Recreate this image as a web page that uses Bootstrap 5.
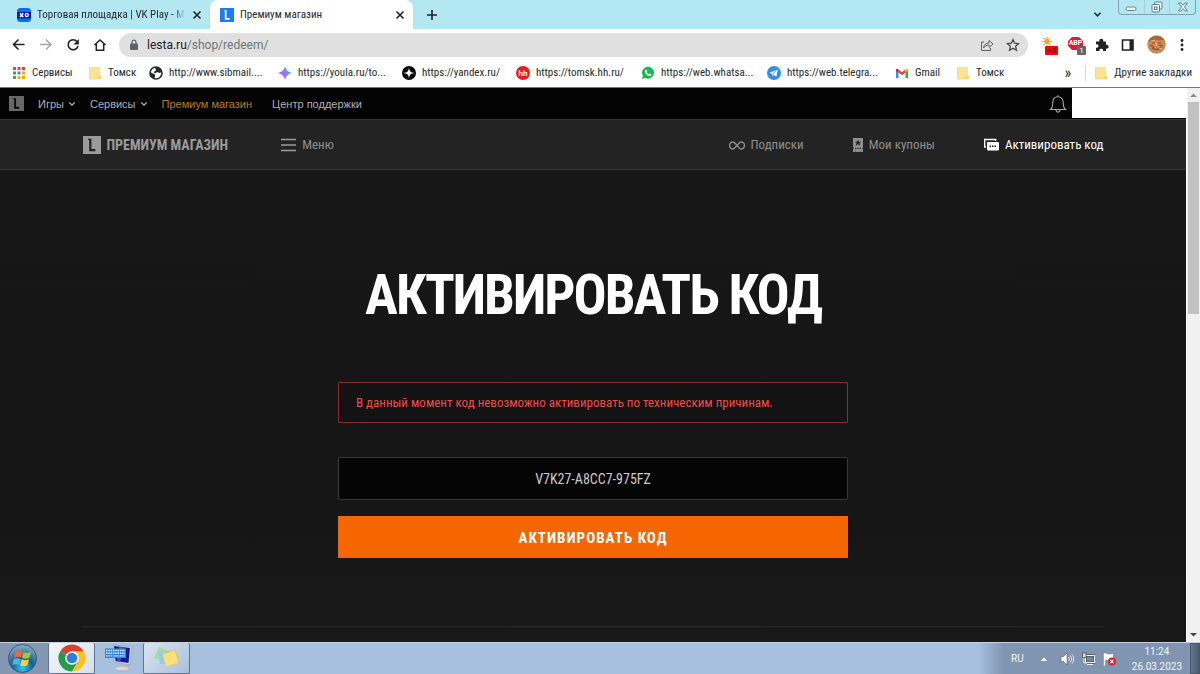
<!DOCTYPE html>
<html lang="ru">
<head>
<meta charset="utf-8">
<meta name="viewport" content="width=device-width, initial-scale=1">
<title>Премиум магазин</title>
<link href="https://cdn.jsdelivr.net/npm/bootstrap@5.3.0/dist/css/bootstrap.min.css" rel="stylesheet">
<style>
  body { font: 11px/16px "Roboto Condensed", Roboto, "Noto Sans", sans-serif; color: #26292d; background: #fff; }
  svg { display: block; flex: none; }
  a { color: inherit; text-decoration: none; }
  button { color: inherit; }
  .bare { border: 0; background: none; padding: 0; }

  /* browser window */
  .tab-strip { height: 29px; background: #b3e8f3; }
  .tab { height: 29px; gap: 6px; }
  .tab-idle { width: 210px; padding: 0 7px 0 17px; }
  .tab-active { width: 203px; padding: 0 7px 0 10px; background: #fff; border-radius: 8px 8px 0 0; }
  .tab-label { white-space: nowrap; text-align: left; min-width: 0; }
  .tab-idle .tab-label { -webkit-mask-image: linear-gradient(90deg, #000 92%, transparent); mask-image: linear-gradient(90deg, #000 92%, transparent); }
  .win-buttons { height: 15px; width: 78px; border: 1px solid #7fa3ad; border-top: 0; border-radius: 0 0 4px 4px; }
  .win-buttons button + button { border-left: 1px solid #a5cdd6; }
  .toolbar { height: 31px; padding: 0 12px; }
  .toolbar-nav { gap: 13px; }
  .omnibox { height: 24px; border-radius: 12px; background: #e0e0e0; padding: 0 8px 0 10px; gap: 8px; margin: 0 14px 0 12px; }
  .omnibox-text { font-family: Roboto, sans-serif; font-size: 12px; color: #70757a; }
  .omnibox-text b { font-weight: 400; color: #202124; }
  .tools { gap: 12px; }
  .chip { position: absolute; font: 8px/9px Roboto, sans-serif; text-align: center; border-radius: 1px; }
  .bookmarks { height: 27px; padding: 0 8px 2px 12px; display: grid; align-items: center; white-space: nowrap; overflow: hidden;
    grid-template-columns: 76px 61px 129px 124px 114px 125px 126px 128px 61px 1fr auto auto; }
  .bookmarks a { display: flex; align-items: center; gap: 6px; }
  .bookmarks a + button { font-size: 16px; margin-right: 14px; }
  .bookmarks a:last-child { border-left: 1px solid #d5d7da; padding-left: 8px; }
  .window-body { border-top: 1px solid #777; }

  /* shop page */
  .page { background: #171717; color: #b4b4b4; overflow: hidden; }
  .portal { height: 32px; background: #030303; border-bottom: 1px solid #333; font: 11px/16px "Liberation Sans", Arial, sans-serif; padding-left: 9px; color: #b0b0b0; }
  .portal-menu { gap: 14px; margin-left: 14px; }
  .portal-menu .current { color: #b87b22; }
  .portal-menu a { margin-right: 6px; }
  .user-box { width: 114px; height: 30px; background: #fff; }
  .narrow { font-family: "Roboto Condensed", "Liberation Sans Narrow", Roboto, sans-serif; }
  .shop-nav { height: 50px; background: #232323; border-bottom: 1px solid #333; font-size: 13px; color: #8e8e8e; }
  .inner { width: 87%; max-width: 1021px; margin: 0 auto; }
  .shop-nav a, .shop-nav button { display: flex; align-items: center; gap: 6px; }
  .shop-brand { font-size: 14px; font-weight: 700; color: #9b9b9b; margin-right: 53px; }
  .shop-links { gap: 49px; }
  .hero { padding-top: 92px; background: linear-gradient(#171717, #161616 60%, #1b1a1a); }
  .hero h1 { font-size: 55px; line-height: 66px; font-weight: 700; letter-spacing: -2px; color: #fff; margin: 0 0 54px; }
  .redeem { width: 100%; max-width: 510px; margin: 0 auto; }
  .notice { border: 1px solid #92262a; background: #131313; color: #f04a48; font-size: 13px; line-height: 19px; padding: 10px 17px; margin-bottom: 34px; border-radius: 1px; }
  .code-field { height: 43px; border: 1px solid #373737; background: #050505; color: #ccc; font-size: 14px; border-radius: 2px; margin-bottom: 16px; width: 100%; text-align: center; display: block; }
  .redeem .go { height: 42px; border: 0; border-radius: 0; background: #f56600; color: #fff; font-size: 15px; font-weight: 700; letter-spacing: 1px; padding: 2px 0 0; }
  .hero hr { margin-top: 68px; border-color: #2b2b2b; opacity: 1; margin-bottom: 0; }
  .scroll-rail { width: 14px; background: #f1f1f1; border-left: 1px solid #fff; }
  .scroll-thumb { width: 11px; height: 212px; background: #c1c1c1; }

  /* taskbar */
  .taskbar { height: 32px; background: #a6c0de; border-top: 1px solid #c3d3e4; }
  .start { width: 48px; background: #8397b2; padding-left: 7px; }
  .task { width: 47px; border: 1px solid #5f7590; border-top: 0; border-radius: 2px; display: flex; align-items: center; justify-content: center; padding: 0; }
  .task-on { background: linear-gradient(135deg, #f4f7fa, #d6e0ec); }
  .task-open { background: linear-gradient(135deg, #dbe4ef, #aac1dc); }
  .task-pin { width: 48px; background: none; border-color: transparent; }
  .tray { background: linear-gradient(90deg, #a6c0de, #8095b1 24px); color: #f1f5fa; padding-left: 32px; font: 10px/15px Roboto, sans-serif; }
  .show-desktop { width: 10px; border: 1px solid #47576c; background: linear-gradient(90deg, #65758b, #4c5c72); }
</style>
</head>
<body class="d-flex flex-column vh-100 overflow-hidden">

<svg width="0" height="0" class="position-absolute" aria-hidden="true">
  <symbol id="close" viewBox="0 0 12 12"><path d="M2.500 2.500l7 7M9.500 2.500l-7 7" stroke="#222" stroke-width="1.600"/></symbol>
  <symbol id="folder" viewBox="0 0 14 14"><path d="M1.500 1h10.500v9l1 1v2H1.500z" fill="#fde293"/><path d="M1.500 1v12h8" fill="none" stroke="#f7cf5b" stroke-width=".6"/><path d="M9.500 11.500l1-1.500H13v3h-3z" fill="#f9d55f"/></symbol>
  <symbol id="lesta" viewBox="0 0 16 16"><path fill="currentColor" d="M0 0h16v16H0z"/><path d="M4.500 2.500H7.500V11.500h3.500v2H5.500V3.500h-1z" fill="var(--cut)"/></symbol>
  <symbol id="down" viewBox="0 0 8 8"><path d="M1.300 2.500L4 5.200l2.700-2.700" fill="none" stroke="currentColor" stroke-width="1.300"/></symbol>
</svg>

<header class="flex-shrink-0">
  <div class="tab-strip d-flex">
    <div class="tab tab-idle d-flex align-items-center">
      <svg width="14" height="14" viewBox="0 0 14 14"><rect width="14" height="14" rx="3.500" fill="#0a6cff"/><path d="M0 4h14v6.500H0z" fill="#0a1bb8"/><path d="M3 5.300l3.200 3.700M6.200 5.300L3 9" stroke="#fff" stroke-width="1.500"/><circle cx="9.800" cy="7.100" r="1.500" fill="none" stroke="#fff" stroke-width="1.300"/></svg>
      <button class="bare tab-label flex-grow-1">Торговая площадка | VK Play - М</button>
      <button class="bare" aria-label="Закрыть вкладку"><svg width="12" height="12"><use href="#close"/></svg></button>
    </div>
    <div class="tab tab-active d-flex align-items-center">
      <svg width="14" height="14" style="--cut:#fff" color="#1b7bf0"><use href="#lesta"/></svg>
      <button class="bare tab-label flex-grow-1">Премиум магазин</button>
      <button class="bare" aria-label="Закрыть вкладку"><svg width="12" height="12"><use href="#close"/></svg></button>
    </div>
    <button class="bare ms-2 ps-1" aria-label="Новая вкладка"><svg width="14" height="14" viewBox="0 0 14 14"><path d="M7 2v10M2 7h10" stroke="#222" stroke-width="1.600"/></svg></button>
    <button class="bare ms-auto me-3" aria-label="Поиск вкладок"><svg width="9" height="9" color="#222"><use href="#down"/></svg></button>
    <div class="win-buttons d-flex me-1">
      <button class="bare flex-fill" aria-label="Свернуть"><svg class="mx-auto" width="12" height="10" viewBox="0 0 12 10"><rect x="1" y="5" width="10" height="3.500" rx="1.500" fill="#e8f7fa" stroke="#688792"/></svg></button>
      <button class="bare flex-fill" aria-label="Развернуть"><svg class="mx-auto" width="12" height="12" viewBox="0 0 12 12"><g fill="#e8f7fa" stroke="#5f7d88"><rect x="3.500" y="1" width="7.500" height="7" rx="1"/><rect x="1" y="3.500" width="7.500" height="7.500" rx="1"/><rect x="3.500" y="6" width="2.500" height="2.500"/></g></svg></button>
      <button class="bare flex-fill" aria-label="Закрыть"><svg class="mx-auto" width="12" height="12" viewBox="0 0 12 12"><path d="M1.500 2h2.500l2 2.300L8 2h2.500L7.500 6l3 4H8L6 7.700 4 10H1.500l3-4z" fill="#e8f7fa" stroke="#688792"/></svg></button>
    </div>
  </div>

  <div class="toolbar d-flex align-items-center">
    <nav class="toolbar-nav d-flex" aria-label="Навигация">
      <button class="bare" aria-label="Назад"><svg width="14" height="14" viewBox="0 0 14 14"><path d="M12.500 6.500h-11M6.500 1.500l-5 5 5 5" fill="none" stroke="#222" stroke-width="1.500"/></svg></button>
      <button class="bare" aria-label="Вперёд"><svg width="14" height="14" viewBox="0 0 14 14"><path d="M1 6.500h11M7 1.500l5 5-5 5" fill="none" stroke="#a3a3a3" stroke-width="1.400"/></svg></button>
      <button class="bare" aria-label="Обновить"><svg width="14" height="14" viewBox="0 0 14 14"><path d="M11 3.500a5 5 0 1 0 1 4.500" fill="none" stroke="#222" stroke-width="1.600"/><path d="M12.800 1v5.500H7.500z" fill="#222"/></svg></button>
      <button class="bare" aria-label="Домой"><svg width="14" height="14" viewBox="0 0 14 14"><path d="M1.500 7L7 2l5.500 5M3.300 6v6.200h7.400V6" fill="none" stroke="#222" stroke-width="1.500"/></svg></button>
    </nav>
    <div class="omnibox d-flex align-items-center flex-grow-1">
      <svg width="10" height="12" viewBox="0 0 10 12"><rect x="1" y="4.500" width="8" height="6.500" rx="1" fill="#5f6368"/><path d="M3 5V3.200a2 2 0 0 1 4 0V5" fill="none" stroke="#5f6368" stroke-width="1.200"/></svg>
      <a href="#" class="omnibox-text flex-grow-1"><b>lesta.ru</b>/shop/redeem/</a>
      <button class="bare me-1" aria-label="Поделиться"><svg width="14" height="14" viewBox="0 0 14 14"><path d="M4 4H1.500v8.500h9V10M3.500 10c.5-3.500 2.500-5 5.500-5V2.500L13 6 9 9.300V7C6.500 7 5 8 3.500 10z" fill="none" stroke="#5f6368" stroke-width="1"/></svg></button>
      <button class="bare" aria-label="В закладки"><svg width="14" height="14" viewBox="0 0 14 14"><path d="M7 1.500l1.600 3.700 4 .4-3 2.700.9 4L7 10.200l-3.500 2.100.9-4-3-2.700 4-.4z" fill="none" stroke="#444" stroke-width="1.200"/></svg></button>
    </div>
    <div class="tools d-flex align-items-center">
      <button class="bare position-relative" aria-label="Погода"><svg width="14" height="16" viewBox="0 0 14 16"><g stroke="#f0a020" stroke-width="1" stroke-dasharray="1.600 7"><path d="M5 0v10M5 9.500V0M0 4.500h10M10 4.500H0M1.500 1l7 7M8.500 8l-7-7M8.500 1l-7 7M1.500 8l7-7"/></g><circle cx="5" cy="4.500" r="2.800" fill="#f7a32b"/></svg><span class="chip" style="left:3px;top:9px;width:13px;background:#f00;color:#400">+3</span></button>
      <button class="bare position-relative" aria-label="Блокировщик рекламы"><svg width="15" height="16" viewBox="0 0 15 16"><path d="M4 0h7l4 4v5l-4 4H4L0 9V4z" fill="#e3173e"/><text x="7.500" y="8" text-anchor="middle" font-family="Roboto" font-size="7" font-weight="700" fill="#fff">ABP</text></svg><span class="chip" style="left:9px;top:9px;width:9px;background:#666;color:#fff">1</span></button>
      <button class="bare" aria-label="Расширения"><svg width="14" height="14" viewBox="0 0 14 14"><path d="M1 3.500h3.500a2 2 0 1 1 3.600 0H11V7a1.900 1.900 0 1 1 0 3.500V13H8a1.800 1.800 0 1 0-3.500 0H1V9.500a1.700 1.700 0 1 0 0-3z" fill="#222"/></svg></button>
      <button class="bare" aria-label="Боковая панель"><svg width="14" height="14" viewBox="0 0 14 14"><path d="M1.500 2h10.500v10H1.500z" fill="none" stroke="#222" stroke-width="1.600"/><path d="M8.500 2H12v10H8.500z" fill="#222"/></svg></button>
      <button class="bare" aria-label="Профиль"><svg width="19" height="19" viewBox="0 0 19 19"><circle cx="9.500" cy="9.500" r="9.300" fill="#c88a56"/><path d="M1.500 6c3-6 12-7 16-1-3-1-4 1-7 0s-5 3-9 1z" fill="#a9643a"/><path d="M5 8h3m3 0h3M5 13c3 2 7 2 10-1M3 11c2-1 3 0 4 2M12 10c2 1 3 0 4 1" stroke="#93502c" stroke-width="1.100" fill="none"/><path d="M8 8c2 0 2 1 1 3M4 6l4-1M12 14l3-1" stroke="#e7ba8e" fill="none"/></svg></button>
      <button class="bare" aria-label="Меню браузера"><svg width="10" height="14" viewBox="0 0 10 14"><g fill="#222"><circle cx="4" cy="2.500" r="1.400"/><circle cx="4" cy="7" r="1.400"/><circle cx="4" cy="11.500" r="1.400"/></g></svg></button>
    </div>
  </div>

  <nav class="bookmarks" aria-label="Закладки">
    <a href="#"><svg width="14" height="14" viewBox="0 0 14 14"><path d="M1 1h3v3H1zM5.500 1h3v3h-3zM10 1h3v3h-3z" fill="#ea4335"/><path d="M1 5.500h3v3H1zM1 10h3v3H1z" fill="#34a853"/><path d="M5.500 5.500h3v3h-3z" fill="#4285f4"/><path d="M10 5.500h3v3h-3zM5.500 10h3v3h-3zM10 10h3v3h-3z" fill="#fbaa05"/></svg>Сервисы</a>
    <a href="#"><svg width="14" height="14"><use href="#folder"/></svg>Томск</a>
    <a href="#"><svg width="14" height="14" viewBox="0 0 14 14"><circle cx="7" cy="7" r="6" fill="#fff" stroke="#26292d" stroke-width="1.600"/><path d="M1 6l3 1.500 2 1v2.500l-1 1.500C2.500 12 .8 9 1 6zM6 1c3-.5 6 1.500 6.500 5l-2 1-2.500-1-2 1.500L4.500 6 7 4.500z" fill="#26292d"/></svg>http://www.sibmail....</a>
    <a href="#"><svg width="14" height="14" viewBox="0 0 14 14"><defs><linearGradient id="yo" x1="0" y1="1" x2="1" y2="0"><stop offset=".2" stop-color="#e04df0"/><stop offset=".5" stop-color="#8a7bf8"/><stop offset=".8" stop-color="#22c8f0"/></linearGradient></defs><path d="M7 0c1 4 3 6 7 7-4 1-6 3-7 7-1-4-3-6-7-7 4-1 6-3 7-7z" fill="url(#yo)"/></svg>https://youla.ru/to...</a>
    <a href="#"><svg width="14" height="14" viewBox="0 0 14 14"><circle cx="7" cy="7" r="7" fill="#050505"/><path d="M7 1c.3 4.500 1.500 5.700 6 6-4.500.3-5.700 1.500-6 6-.3-4.500-1.500-5.700-6-6 4.500-.3 5.700-1.500 6-6z" fill="#fff"/></svg>https://yandex.ru/</a>
    <a href="#"><svg width="14" height="14" viewBox="0 0 14 14"><circle cx="7" cy="7" r="7" fill="#f5151d"/><text x="7" y="10" text-anchor="middle" font-family="Roboto" font-size="8" font-weight="700" fill="#fff">hh</text></svg>https://tomsk.hh.ru/</a>
    <a href="#"><svg width="14" height="14" viewBox="0 0 14 14"><path d="M1 13l.9-3.200A6 6 0 1 1 4.200 12z" fill="#15b94f"/><path d="M4.500 3.800l1-.2.8 1.700-.6.9c.5 1 1.200 1.600 2.200 2l.8-.8 1.600.9c-.1 1.300-1 1.800-2.200 1.500C5.800 9.300 4 7.300 3.800 5.500z" fill="#fff"/></svg>https://web.whatsa...</a>
    <a href="#"><svg width="14" height="14" viewBox="0 0 14 14"><circle cx="7" cy="7" r="7" fill="#2e8fea"/><path d="M2.500 6.800l8.300-3.300-1.500 7.300-2.500-1.800-1.300 1.300-.4-2.300z" fill="#fff"/><path d="M5.300 8l3.700-2.800" stroke="#2e8fea" stroke-width=".8"/></svg>https://web.telegra...</a>
    <a href="#"><svg width="14" height="14" viewBox="0 0 14 14"><path d="M1 4v8h2.500V5z" fill="#4285f4"/><path d="M10.500 5v7H13V4z" fill="#34a853"/><path d="M3.500 3.500L7 6.200l3.500-2.700v3L7 9.200 3.500 6.500z" fill="#ea4335"/><path d="M1 4c0-2 1.500-1.500 2.500-.5v3L1 4.700z" fill="#c5221f"/><path d="M13 4c0-2-1.500-1.500-2.500-.5v3L13 4.700z" fill="#fbbc04"/></svg>Gmail</a>
    <a href="#"><svg width="14" height="14"><use href="#folder"/></svg>Томск</a>
    <button class="bare" aria-label="Другие">»</button>
    <a href="#"><svg width="14" height="14"><use href="#folder"/></svg>Другие закладки</a>
  </nav>
</header>

<div class="window-body d-flex flex-grow-1 overflow-hidden">
  <div class="page flex-grow-1">
    <nav class="portal d-flex align-items-center" aria-label="Портал">
      <a href="#" aria-label="Lesta"><svg width="15" height="15" style="--cut:#0a0a0a" color="#686868"><use href="#lesta"/></svg></a>
      <div class="portal-menu d-flex align-items-center">
        <button class="bare d-flex align-items-center gap-1">Игры <svg width="8" height="8"><use href="#down"/></svg></button>
        <button class="bare d-flex align-items-center gap-1">Сервисы <svg width="8" height="8"><use href="#down"/></svg></button>
        <a href="#" class="current">Премиум магазин</a>
        <a href="#">Центр поддержки</a>
      </div>
      <button class="bare ms-auto me-1" aria-label="Уведомления"><svg width="20" height="20" viewBox="0 0 20 20"><path d="M10 1.200v1.500M2.500 15.500h15c-2-1.500-2.200-3-2.200-6.500C15.300 5 13 2.800 10 2.800S4.700 5 4.700 9c0 3.500-.2 5-2.200 6.500zM8 16c.2 2.800 3.800 2.800 4 0" fill="none" stroke="#aaa" stroke-width="1.100"/></svg></button>
      <div class="user-box align-self-start"></div>
    </nav>

    <nav class="shop-nav narrow d-flex" aria-label="Магазин">
      <div class="inner d-flex align-items-center">
        <a href="#" class="shop-brand"><svg width="18" height="18" style="--cut:#232323" color="#9b9b9b"><use href="#lesta"/></svg>ПРЕМИУМ МАГАЗИН</a>
        <button class="bare"><svg width="15" height="14" viewBox="0 0 15 14"><path d="M0 1.500h15M0 7h15M0 12.500h15" stroke="#9b9b9b" stroke-width="1.600"/></svg>Меню</button>
        <div class="shop-links d-flex ms-auto">
          <a href="#"><svg width="16" height="14" viewBox="0 0 16 14"><path d="M8 7.500C6.500 5.500 5.500 4 4 4a3.300 3.300 0 0 0 0 7c1.500 0 2.500-1.500 4-3.500S10.500 4 12 4a3.300 3.300 0 0 1 0 7c-1.500 0-2.500-1.500-4-3.500z" fill="none" stroke="#8e8e8e" stroke-width="1.400"/></svg>Подписки</a>
          <a href="#"><svg width="10" height="14" viewBox="0 0 10 14"><path d="M0 0h10v9.500a1 1 0 0 0 0 1.800V14H8.300a1 1 0 0 0-1.800 0h-3a1 1 0 0 0-1.800 0H0v-2.700a1 1 0 0 0 0-1.800z" fill="#8e8e8e"/><path d="M5 1.800l1 2h2L6.500 5.200l.6 2.200L5 6.200 2.900 7.400l.6-2.200L2 3.800h2z" fill="#232323"/><path d="M2 10.400h6" stroke="#232323" stroke-dasharray="1.500 .7"/></svg>Мои купоны</a>
          <a href="#" class="text-white" aria-current="page"><svg width="15" height="13" viewBox="0 0 15 13"><path d="M2 9H.7V1.500h11V3" fill="none" stroke="#fff" stroke-width="1.300"/><rect x="3" y="4" width="12" height="8.500" rx="1" fill="#fff"/><path d="M5.500 8.300h7" stroke="#232323" stroke-width="1.500" stroke-dasharray="1.500 1"/></svg>Активировать код</a>
        </div>
      </div>
    </nav>

    <main class="hero narrow h-100 text-center">
      <div class="inner">
        <h1>АКТИВИРОВАТЬ КОД</h1>
        <form class="redeem" onsubmit="return false">
          <div class="notice text-start" role="alert">В данный момент код невозможно активировать по техническим причинам.</div>
          <input class="code-field" type="text" value="V7K27-A8CC7-975FZ" aria-label="Код">
          <button class="btn go w-100">АКТИВИРОВАТЬ КОД</button>
        </form>
        <hr>
      </div>
    </main>
  </div>
  <div class="scroll-rail d-flex flex-column align-items-center justify-content-between flex-shrink-0">
    <div>
      <svg width="11" height="14" viewBox="0 0 11 14"><path d="M2 9l3.500-3.500L9 9z" fill="#8d8d8d"/></svg>
      <div class="scroll-thumb"></div>
    </div>
    <svg width="11" height="14" viewBox="0 0 11 14"><path d="M2 5l3.500 3.500L9 5z" fill="#444"/></svg>
  </div>
</div>

<footer class="taskbar d-flex flex-shrink-0">
  <button class="bare start" aria-label="Пуск"><svg width="31" height="31" viewBox="0 0 31 31"><defs><radialGradient id="orb" cx=".5" cy=".85" r=".85"><stop offset="0" stop-color="#35c5ee"/><stop offset=".45" stop-color="#14608f"/><stop offset="1" stop-color="#8fb1c9"/></radialGradient></defs><circle cx="15.500" cy="15.500" r="14" fill="url(#orb)" stroke="#31597a"/><path d="M8.500 8.500c3-1.500 5-1 7 0L14 14.500c-2-1-4-1-7 .3z" fill="#f0662c"/><path d="M16.500 9c2.500 1.200 4.500 1.200 7.500 0l-1.700 6c-3 1.200-5 .9-7.300-.3z" fill="#9ccb3b"/><path d="M6.700 16c3-1.300 5-1 7 0l-1.600 6c-2-1-4-1.200-7 0z" fill="#4db2ee"/><path d="M14.800 16.300c2.500 1.200 4.500 1.200 7.200.2l-1.700 6c-3 1-5 .9-7.200-.3z" fill="#fcd03d"/></svg></button>
  <button class="task task-on" aria-label="Google Chrome"><svg width="28" height="28" viewBox="0 0 28 28"><path d="M14 14L2.300 7.200A13.500 13.500 0 0 1 25.700 7.200z" fill="#e33b2e"/><path d="M14 14L2.300 7.200A13.500 13.500 0 0 0 14 27.500l5.900-10z" fill="#249c4c"/><path d="M14 7.200h11.700A13.500 13.500 0 0 1 14 27.500l6-10z" fill="#fcc31d"/><circle cx="14" cy="14" r="6.800" fill="#fff"/><circle cx="14" cy="14" r="5.300" fill="#317be8"/></svg></button>
  <button class="task task-pin" aria-label="Экранная клавиатура"><svg width="28" height="28" viewBox="0 0 28 28"><path d="M8 1l19 2-2 18-16-3z" fill="#d8d8d6" stroke="#999" stroke-width=".6"/><path d="M9 2l16 2-1.500 15L10.500 17z" fill="#0b1c9c"/><path d="M14 2.500l5 1L15 18l-3-.5z" fill="#3157d8"/><path d="M14 20l6 1v3h-6z" fill="#bbb"/><ellipse cx="17" cy="24.500" rx="7.500" ry="2.500" fill="#d5d7da" stroke="#999" stroke-width=".5"/><path d="M0 4.500h21V14H0z" fill="#2f86d2"/><path d="M1 6.500h19M1 9.200h19M1 11.900h19" stroke="#d9efff" stroke-width="1.400" stroke-dasharray="1.500 .8"/></svg></button>
  <button class="task task-open" aria-label="Записки"><svg width="28" height="28" viewBox="0 0 28 28"><path d="M6 3l10 4-4 10-11-3z" fill="#a6dca5"/><path d="M6 8l12-1 0 13-11 0z" fill="#94c9f2"/><path d="M9 10l13-4 4 13-13 4z" fill="#f8e07a" stroke="#dbc057" stroke-width=".6"/></svg></button>
  <div class="tray ms-auto d-flex align-items-center">
    <span class="me-3">RU</span>
    <button class="bare me-2" aria-label="Скрытые значки"><svg width="8" height="8" viewBox="0 0 8 8"><path d="M.8 6L4 2.500 7.200 6z" fill="#fff"/></svg></button>
    <button class="bare ms-1 me-2" aria-label="Громкость"><svg width="14" height="14" viewBox="0 0 14 14"><path d="M1 4.500h2.500L7 1v12L3.500 9.500H1z" fill="#fff" stroke="#556" stroke-width=".6"/><path d="M8.500 5c1 1.500 1 2.500 0 4M10.200 3.500c2 2.500 2 4.500 0 7M12 2.500c2.300 3 2.300 6 0 9" fill="none" stroke="#e9eef4" stroke-width=".9"/></svg></button>
    <button class="bare me-2" aria-label="Сеть"><svg width="13" height="14" viewBox="0 0 13 14"><rect x="3.500" y="3.500" width="9" height="7" fill="#76869a" stroke="#333c48" stroke-width="2"/><rect x="3.500" y="3.500" width="9" height="7" fill="none" stroke="#f0f2f4"/><path d="M5 12.500h6M2 4v7h3" stroke="#f0f2f4" fill="none"/><rect x="0.500" y="1" width="3.500" height="4.500" fill="#dedede" stroke="#444" stroke-width=".7"/></svg></button>
    <button class="bare me-3" aria-label="Центр поддержки"><svg width="13" height="14" viewBox="0 0 13 14"><path d="M1.500 1v12.500" stroke="#fff" stroke-width="1.300"/><path d="M2 1.500c3 0 3 1.500 8 .5v6c-4 1.200-5-.6-8-.3z" fill="#fff"/><circle cx="9" cy="9.500" r="4" fill="#d9252b"/><path d="M7.400 7.900l3.200 3.200M10.600 7.900l-3.200 3.200" stroke="#fff" stroke-width="1.200"/></svg></button>
    <div class="text-center me-2">11:24<br>26.03.2023</div>
    <button class="bare show-desktop align-self-stretch" aria-label="Показать рабочий стол"></button>
  </div>
</footer>
<script src="https://cdn.jsdelivr.net/npm/bootstrap@5.3.0/dist/js/bootstrap.bundle.min.js"></script>
</body>
</html>
